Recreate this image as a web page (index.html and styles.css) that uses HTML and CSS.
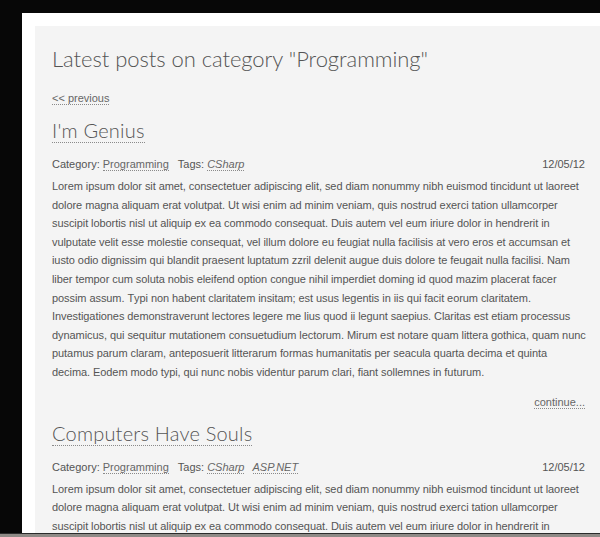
FILE: index.html
```html
<!DOCTYPE html>
<html>
<head>
<meta charset="utf-8">
<link rel="stylesheet" href="styles.css">
</head>
<body>
<div class="frame">
  <div class="panel">
    <h1 class="page-title">Latest posts on category "Programming"</h1>
    <div class="pager"><a class="link" href="#">&lt;&lt; previous</a></div>

    <article class="post">
      <h2 class="post-title"><a href="#">I'm Genius</a></h2>
      <div class="meta">
        <span class="meta-left">Category: <a class="link" href="#">Programming</a><span class="tags">Tags: <a class="link tag" href="#">CSharp</a></span></span>
        <span class="date">12/05/12</span>
      </div>
      <p class="body">Lorem ipsum dolor sit amet, consectetuer adipiscing elit, sed diam nonummy nibh euismod tincidunt ut laoreet dolore magna aliquam erat volutpat. Ut wisi enim ad minim veniam, quis nostrud exerci tation ullamcorper suscipit lobortis nisl ut aliquip ex ea commodo consequat. Duis autem vel eum iriure dolor in hendrerit in vulputate velit esse molestie consequat, vel illum dolore eu feugiat nulla facilisis at vero eros et accumsan et iusto odio dignissim qui blandit praesent luptatum zzril delenit augue duis dolore te feugait nulla facilisi. Nam liber tempor cum soluta nobis eleifend option congue nihil imperdiet doming id quod mazim placerat facer possim assum. Typi non habent claritatem insitam; est usus legentis in iis qui facit eorum claritatem. Investigationes demonstraverunt lectores legere me lius quod ii legunt saepius. Claritas est etiam processus dynamicus, qui sequitur mutationem consuetudium lectorum. Mirum est notare quam littera gothica, quam nunc putamus parum claram, anteposuerit litterarum formas humanitatis per seacula quarta decima et quinta decima. Eodem modo typi, qui nunc nobis videntur parum clari, fiant sollemnes in futurum.</p>
      <div class="more"><a class="link" href="#">continue...</a></div>
    </article>

    <article class="post">
      <h2 class="post-title"><a href="#">Computers Have Souls</a></h2>
      <div class="meta">
        <span class="meta-left">Category: <a class="link" href="#">Programming</a><span class="tags">Tags: <a class="link tag" href="#">CSharp</a> <a class="link tag" href="#">ASP.NET</a></span></span>
        <span class="date">12/05/12</span>
      </div>
      <p class="body">Lorem ipsum dolor sit amet, consectetuer adipiscing elit, sed diam nonummy nibh euismod tincidunt ut laoreet dolore magna aliquam erat volutpat. Ut wisi enim ad minim veniam, quis nostrud exerci tation ullamcorper suscipit lobortis nisl ut aliquip ex ea commodo consequat. Duis autem vel eum iriure dolor in hendrerit in vulputate velit esse molestie consequat, vel illum dolore eu feugiat nulla facilisis at vero eros et accumsan et iusto odio dignissim qui blandit praesent luptatum zzril delenit augue duis dolore te feugait nulla facilisi.</p>
    </article>
  </div>
</div>
<div class="taskbar"></div>
</body>
</html>
```

FILE: styles.css
```css
html, body {
  margin: 0;
  padding: 0;
  height: 100%;
  overflow: hidden;
  background: #070707;
}

.frame {
  margin: 13px 0 0 22px;
  padding: 13px 0 0 13px;
  background: #ffffff;
  min-height: 600px;
}

.panel {
  background: #f4f4f4;
  padding: 18px 15px 40px 17px;
  min-height: 600px;
  font-family: "Liberation Sans", Arial, sans-serif;
  font-size: 11px;
  color: #555555;
}

.page-title {
  margin: 0;
  font-family: Lato, "Liberation Sans", sans-serif;
  font-weight: 300;
  font-size: 22px;
  line-height: 30px;
  color: #555555;
  letter-spacing: -0.05px;
}

.pager {
  margin-top: 17px;
  line-height: 14px;
}

.link {
  color: #666666;
  text-decoration: none;
  border-bottom: 1px dotted #8a8a8a;
}

.tag {
  font-style: italic;
  margin-right: 5px;
}

.post {
  margin-top: 12px;
}

.post-title {
  margin: 0;
  font-family: Lato, "Liberation Sans", sans-serif;
  font-weight: 300;
  font-size: 20px;
  line-height: 26px;
  letter-spacing: 0.2px;
}

.post-title a {
  color: #555555;
  text-decoration: none;
  border-bottom: 1px dotted #8a8a8a;
}

.meta {
  display: flex;
  justify-content: space-between;
  margin-top: 14px;
  line-height: 14px;
}

.tags {
  margin-left: 9px;
}

.body {
  margin: 6px -1.5px 0 0;
  line-height: 18.6px;
  letter-spacing: -0.07px;
  font-kerning: none;
}

.more {
  text-align: right;
  margin-top: 13px;
  line-height: 14px;
}

.post + .post {
  margin-top: 11px;
}

.taskbar {
  position: fixed;
  left: 0;
  right: 0;
  bottom: 0;
  height: 3px;
  background: #8e8a86;
  border-top: 1px solid #2a2a2a;
}
```
